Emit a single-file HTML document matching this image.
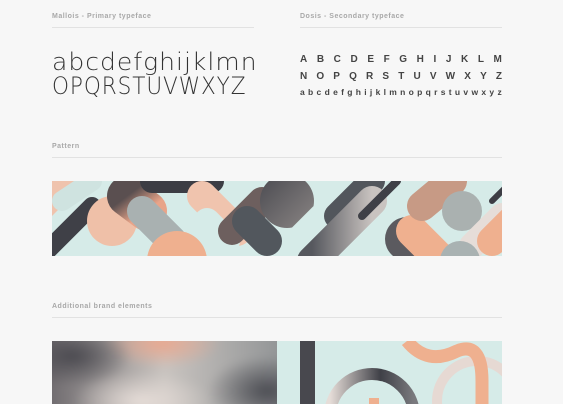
<!DOCTYPE html>
<html><head><style>
html,body{margin:0;width:563px;height:404px;overflow:hidden}
body{background:#f7f7f7;position:relative;font-family:"Liberation Sans",sans-serif}
.lab{position:absolute;font-size:7px;color:#a8a8a8;font-weight:bold;letter-spacing:.5px}
.ln{position:absolute;height:1px;background:#e2e2e2}
.p1{position:absolute;left:52px;font-family:"DejaVu Sans",sans-serif;font-weight:200;font-size:24px;color:#333;line-height:24px;white-space:nowrap;transform-origin:left}
.d{position:absolute;left:300px;width:202px;display:flex;justify-content:space-between;color:#444;font-weight:bold}
</style></head><body>
<div class="lab" style="left:52px;top:13px">Mallois - Primary typeface</div>
<div class="ln" style="left:52px;top:27px;width:202px"></div>
<div class="lab" style="left:300px;top:13px">Dosis - Secondary typeface</div>
<div class="ln" style="left:300px;top:27px;width:202px"></div>
<div class="p1" style="top:50px;transform:scaleX(1.04);letter-spacing:1px">abcdefghijklmn</div>
<div class="p1" style="top:74px;transform:scaleX(0.9);letter-spacing:1px">OPQRSTUVWXYZ</div>
<div class="d" style="top:54px;font-size:10px"><span>A</span><span>B</span><span>C</span><span>D</span><span>E</span><span>F</span><span>G</span><span>H</span><span>I</span><span>J</span><span>K</span><span>L</span><span>M</span></div>
<div class="d" style="top:71px;font-size:10px"><span>N</span><span>O</span><span>P</span><span>Q</span><span>R</span><span>S</span><span>T</span><span>U</span><span>V</span><span>W</span><span>X</span><span>Y</span><span>Z</span></div>
<div class="d" style="top:87px;font-size:8.5px"><span>a</span><span>b</span><span>c</span><span>d</span><span>e</span><span>f</span><span>g</span><span>h</span><span>i</span><span>j</span><span>k</span><span>l</span><span>m</span><span>n</span><span>o</span><span>p</span><span>q</span><span>r</span><span>s</span><span>t</span><span>u</span><span>v</span><span>w</span><span>x</span><span>y</span><span>z</span></div>

<div class="lab" style="left:52px;top:143px">Pattern</div>
<div class="ln" style="left:52px;top:157px;width:450px"></div>
<svg style="position:absolute;left:52px;top:181px" width="450" height="75" viewBox="0 0 450 75">
<defs>
<linearGradient id="g1" x1="0" y1="0" x2="1" y2="1"><stop offset="0" stop-color="#4a4a50"/><stop offset="1" stop-color="#8a8584"/></linearGradient>
<linearGradient id="g2" x1="0" y1="0" x2="1" y2="1"><stop offset="0" stop-color="#5a4f50"/><stop offset="1" stop-color="#e8a489"/></linearGradient>
<linearGradient id="g3" x1="0" y1="0" x2="1" y2="0"><stop offset="0" stop-color="#56585e"/><stop offset="1" stop-color="#c9c3c0"/></linearGradient>
<clipPath id="c"><rect width="450" height="75"/></clipPath>
</defs>
<g clip-path="url(#c)" stroke-linecap="round" fill="none">
<rect width="450" height="75" fill="#d6ebe8"/>
<path d="M0 0 L35 0 L0 35Z" fill="#efc3ad"/>
<path d="M10 20 L40 0" stroke="#cfe3e0" stroke-width="20"/>
<path d="M-10 75 L40 25" stroke="#3f4047" stroke-width="18"/>
<circle cx="60" cy="40" r="25" fill="#efc0a8"/>
<path d="M95 30 L75 15" stroke="url(#g2)" stroke-width="40"/>
<path d="M100 0 L160 0" stroke="#3c3d44" stroke-width="24"/>
<path d="M120 60 L90 30" stroke="#a9b1b1" stroke-width="30"/>
<path d="M150 15 L185 50" stroke="#f0c4ae" stroke-width="30"/>
<circle cx="125" cy="80" r="30" fill="#efb08f"/>
<path d="M175 60 L155 40" stroke="#d6ebe8" stroke-width="26"/>
<path d="M180 50 L210 20" stroke="#6d5f5e" stroke-width="28"/>
<path d="M215 60 L195 40" stroke="#52575d" stroke-width="30"/>
<circle cx="235" cy="20" r="27" fill="url(#g1)"/>
<path d="M245 60 L270 35" stroke="#d6ebe8" stroke-width="26"/>
<path d="M285 35 L320 0" stroke="#52565c" stroke-width="26"/>
<path d="M260 80 L320 20" stroke="url(#g3)" stroke-width="30"/>
<path d="M310 35 L345 0" stroke="#3f4047" stroke-width="8"/>
<circle cx="355" cy="58" r="22" fill="#5b5a5f"/>
<path d="M360 50 L385 75" stroke="#efb08f" stroke-width="32"/>
<path d="M370 25 L400 0" stroke="#c79a85" stroke-width="30"/>
<circle cx="410" cy="30" r="20" fill="#aab1b0"/>
<path d="M420 65 L450 35" stroke="#e6ddd8" stroke-width="26"/>
<circle cx="408" cy="80" r="20" fill="#a9b2b2"/>
<path d="M440 60 L460 40" stroke="#efb08f" stroke-width="30"/>
<path d="M440 20 L455 5" stroke="#3c3d44" stroke-width="6"/>
</g>
</svg>

<div class="lab" style="left:52px;top:303px">Additional brand elements</div>
<div class="ln" style="left:52px;top:317px;width:450px"></div>
<div style="position:absolute;left:52px;top:341px;width:225px;height:63px;overflow:hidden">
<div style="position:absolute;left:-10px;top:-10px;width:245px;height:83px;background:radial-gradient(ellipse 60px 30px at 30px 25px,#4b4a50,transparent),radial-gradient(ellipse 60px 25px at 120px 12px,#e9a88f,transparent),radial-gradient(ellipse 70px 30px at 100px 70px,#e6ddd8,transparent),radial-gradient(ellipse 60px 35px at 225px 60px,#4c4d53,transparent),linear-gradient(90deg,#6a666a,#c9c4c0 50%,#8f9294);filter:blur(4px)"></div>
</div>
<div style="position:absolute;left:277px;top:341px;width:225px;height:63px;background:#d6ebe8;overflow:hidden">
<div style="position:absolute;left:23px;top:0;width:15px;height:63px;background:#48484e"></div>
<svg style="position:absolute;left:0;top:0" width="225" height="63">
<defs><linearGradient id="rg"><stop offset="0" stop-color="#e6ddd8"/><stop offset="0.6" stop-color="#3f4047"/><stop offset="1" stop-color="#7a7a7e"/></linearGradient></defs>
<circle cx="200" cy="60" r="40" fill="none" stroke="#e6d9d3" stroke-width="10"/>
<path d="M130 0 Q150 25 180 10 Q205 0 205 40 L205 63" fill="none" stroke="#efb08f" stroke-width="13"/>
<circle cx="95" cy="75" r="42" fill="none" stroke="url(#rg)" stroke-width="12"/>
<rect x="92" y="57" width="10" height="6" fill="#efb08f"/>
</svg>
</div>
</body></html>
